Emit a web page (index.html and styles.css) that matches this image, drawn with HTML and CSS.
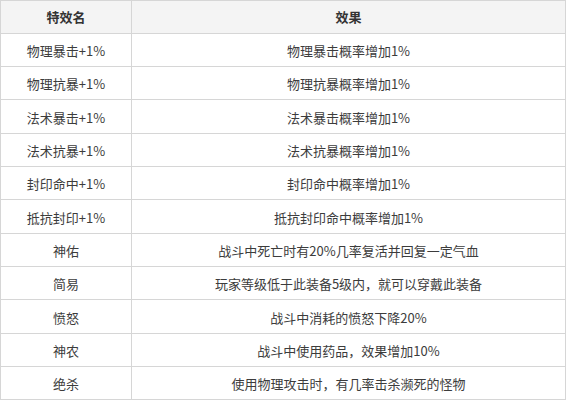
FILE: index.html
```html
<!DOCTYPE html>
<html lang="zh">
<head>
<meta charset="utf-8">
<link rel="stylesheet" href="styles.css">
</head>
<body>
<div class="fx" role="table">
  <div class="cell head">特效名</div><div class="cell head">效果</div>
  <div class="cell">物理暴击+1%</div><div class="cell">物理暴击概率增加1%</div>
  <div class="cell">物理抗暴+1%</div><div class="cell">物理抗暴概率增加1%</div>
  <div class="cell">法术暴击+1%</div><div class="cell">法术暴击概率增加1%</div>
  <div class="cell">法术抗暴+1%</div><div class="cell">法术抗暴概率增加1%</div>
  <div class="cell">封印命中+1%</div><div class="cell">封印命中概率增加1%</div>
  <div class="cell">抵抗封印+1%</div><div class="cell">抵抗封印命中概率增加1%</div>
  <div class="cell">神佑</div><div class="cell">战斗中死亡时有20%几率复活并回复一定气血</div>
  <div class="cell">简易</div><div class="cell">玩家等级低于此装备5级内，就可以穿戴此装备</div>
  <div class="cell">愤怒</div><div class="cell">战斗中消耗的愤怒下降20%</div>
  <div class="cell">神农</div><div class="cell">战斗中使用药品，效果增加10%</div>
  <div class="cell">绝杀</div><div class="cell">使用物理攻击时，有几率击杀濒死的怪物</div>
</div>
</body>
</html>
```
FILE: styles.css
```css
html, body {
  margin: 0;
  padding: 0;
  background: #fff;
}
.fx {
  width: 566px;
  box-sizing: border-box;
  display: grid;
  grid-template-columns: 131px 1fr;
  grid-auto-rows: 33.333px;
  border-top: 1px solid #d6d6d6;
  border-left: 1px solid #d6d6d6;
  margin-top: -0.5px;
  font-family: "Noto Sans CJK SC", "Noto Sans", sans-serif;
  font-size: 13px;
  color: #3c3c3c;
}
.cell {
  box-sizing: border-box;
  border-right: 1px solid #d6d6d6;
  border-bottom: 1px solid #d6d6d6;
  display: flex;
  align-items: center;
  justify-content: center;
  padding-top: 2px;
  line-height: 16px;
  white-space: nowrap;
}
.head {
  background: #f4f4f4;
  font-weight: bold;
  color: #333;
  padding-top: 0;
}
```
